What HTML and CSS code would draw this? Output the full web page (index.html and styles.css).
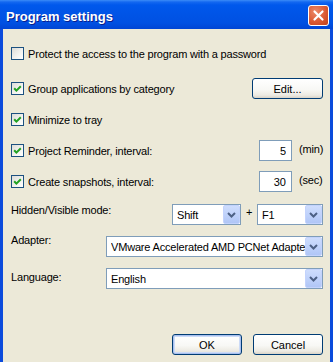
FILE: index.html
```html
<!DOCTYPE html>
<html lang="en">

<head>
  <meta charset="UTF-8">
  <meta name="viewport" content="width=device-width, initial-scale=1.0">
  <title>Program settings</title>
  <link rel="stylesheet" href="styles.css">
</head>

<body>
  <div class="window">
    <div class="titlebar">
      <span class="title">Program settings</span>
      <span class="close">
        <svg width="19" height="19" viewBox="0 0 19 19">
          <path d="M5.5 5.5 L13.5 13.5 M13.5 5.5 L5.5 13.5" stroke="#fff" stroke-width="2.2" stroke-linecap="round" />
        </svg>
      </span>
    </div>

    <div class="client">
      <div class="options">
        <div class="row">
          <label class="check"><span class="box"></span>Protect the access to the program with a password</label>
        </div>
        <div class="row row-spaced">
          <label class="check">
            <span class="box"><svg width="11" height="11" viewBox="0 0 11 11"><polyline points="2.2,5.2 4.4,7.6 8.8,3.2" fill="none" stroke="#21A121" stroke-width="2" /></svg></span>Group applications by category
          </label>
          <button class="btn btn-edit">Edit...</button>
        </div>
        <div class="row">
          <label class="check">
            <span class="box"><svg width="11" height="11" viewBox="0 0 11 11"><polyline points="2.2,5.2 4.4,7.6 8.8,3.2" fill="none" stroke="#21A121" stroke-width="2" /></svg></span>Minimize to tray
          </label>
        </div>
        <div class="row">
          <label class="check">
            <span class="box"><svg width="11" height="11" viewBox="0 0 11 11"><polyline points="2.2,5.2 4.4,7.6 8.8,3.2" fill="none" stroke="#21A121" stroke-width="2" /></svg></span>Project Reminder, interval:
          </label>
          <input class="num" type="text" value="5">
          <span class="unit">(min)</span>
        </div>
        <div class="row">
          <label class="check">
            <span class="box"><svg width="11" height="11" viewBox="0 0 11 11"><polyline points="2.2,5.2 4.4,7.6 8.8,3.2" fill="none" stroke="#21A121" stroke-width="2" /></svg></span>Create snapshots, interval:
          </label>
          <input class="num" type="text" value="30">
          <span class="unit">(sec)</span>
        </div>
      </div>

      <div class="fields">
        <div class="row">
          <span class="field-label lbl-hidden">Hidden/Visible mode:</span>
          <div class="select select-key">
            <span class="select-text">Shift</span>
            <span class="drop"><svg width="9" height="6" viewBox="0 0 9 6"><polyline points="1,1 4.5,4.5 8,1" fill="none" stroke="#4D6185" stroke-width="2" /></svg></span>
          </div>
          <span class="plus">+</span>
          <div class="select select-f">
            <span class="select-text">F1</span>
            <span class="drop"><svg width="9" height="6" viewBox="0 0 9 6"><polyline points="1,1 4.5,4.5 8,1" fill="none" stroke="#4D6185" stroke-width="2" /></svg></span>
          </div>
        </div>
        <div class="row">
          <span class="field-label lbl-adapter">Adapter:</span>
          <div class="select select-wide">
            <span class="select-text">VMware Accelerated AMD PCNet Adapter</span>
            <span class="drop"><svg width="9" height="6" viewBox="0 0 9 6"><polyline points="1,1 4.5,4.5 8,1" fill="none" stroke="#4D6185" stroke-width="2" /></svg></span>
          </div>
        </div>
        <div class="row">
          <span class="field-label lbl-language">Language:</span>
          <div class="select select-wide">
            <span class="select-text">English</span>
            <span class="drop"><svg width="9" height="6" viewBox="0 0 9 6"><polyline points="1,1 4.5,4.5 8,1" fill="none" stroke="#4D6185" stroke-width="2" /></svg></span>
          </div>
        </div>
      </div>

      <div class="footer">
        <button class="btn btn-default">OK</button>
        <button class="btn">Cancel</button>
      </div>
    </div>
  </div>
</body>

</html>
```

FILE: styles.css
```css
/* Window frame */

* {
  box-sizing: border-box;
}

body {
  margin: 0;
  background: #ECE9D8;
  font-family: "Liberation Sans", Arial, sans-serif;
  font-size: 11px;
  letter-spacing: -0.18px;
  color: #000;
}

.window {
  width: 333px;
  height: 362px;
  display: flex;
  flex-direction: column;
}

.titlebar {
  height: 29px;
  padding: 4px 4px 0 6px;
  display: flex;
  align-items: flex-start;
  background: linear-gradient(180deg, #3B8CF7 0px, #1468F0 2px, #0058EC 5px, #0054E6 50%, #0050E2 80%, #0045D4 100%);
}

.title {
  flex: 1;
  line-height: 25px;
  color: #fff;
  font-weight: bold;
  font-size: 13px;
  letter-spacing: 0;
  text-shadow: 1px 1px 0 #0A1E8C;
}

.close {
  width: 21px;
  height: 21px;
  margin-top: 1px;
  border: 1px solid #fff;
  border-radius: 3px;
  background: radial-gradient(circle at 35% 30%, #EC8A6A 0%, #DB5A33 55%, #C2401A 100%);
  display: flex;
  align-items: center;
  justify-content: center;
}

.client {
  flex: 1;
  display: flex;
  flex-direction: column;
  border-left: 3px solid #0B4BDC;
  border-right: 3px solid #0B4BDC;
  padding: 0 7px 7px 8px;
}

/* Rows */

.row {
  display: flex;
  align-items: center;
  height: 21px;
}

.options {
  display: flex;
  flex-direction: column;
  gap: 10px;
  padding-top: 14px;
}

.row-spaced {
  margin-top: 4px;
}

.check {
  flex: 1;
  display: flex;
  align-items: center;
  white-space: nowrap;
}

.box {
  width: 13px;
  height: 13px;
  margin-right: 4px;
  border: 1px solid #1C5180;
  background: linear-gradient(135deg, #DCDCD7 0%, #F4F4F1 60%, #FFFFFF 100%);
  display: flex;
}

.num {
  width: 33px;
  height: 21px;
  border: 1px solid #7F9DB9;
  background: #fff;
  text-align: right;
  padding: 0 5px 0 0;
  font: inherit;
  color: #000;
}

.unit {
  width: 24px;
  margin-left: 7px;
  padding-bottom: 3px;
}

/* Fields */

.fields {
  display: flex;
  flex-direction: column;
  gap: 11px;
  margin-top: 12px;
}

.fields .row {
  align-items: flex-start;
}

.field-label {
  flex: 1;
  line-height: 14px;
}

.lbl-hidden {
  margin-top: -1px;
}

.lbl-adapter {
  margin-top: -3px;
}

.lbl-language {
  margin-top: 2px;
}

.select {
  height: 21px;
  border: 1px solid #7F9DB9;
  background: #fff;
  display: flex;
  align-items: center;
  padding-left: 4px;
}

.select-key {
  width: 69px;
}

.select-f {
  width: 66px;
}

.select-wide {
  width: 217px;
}

.select-text {
  flex: 1;
  overflow: hidden;
  white-space: nowrap;
}

.drop {
  width: 17px;
  height: 19px;
  border: 1px solid #C3D3FD;
  border-radius: 2px;
  background: linear-gradient(180deg, #CEDDFD 0%, #BDD0FA 60%, #B0C6F6 100%);
  display: flex;
  align-items: center;
  justify-content: center;
}

.plus {
  width: 16px;
  text-align: center;
  line-height: 17px;
}

/* Buttons */

.btn {
  height: 21px;
  padding: 0;
  border: 1px solid #003C74;
  border-radius: 3px;
  background: linear-gradient(180deg, #FFFFFF 0%, #F8F8F5 55%, #ECEAE2 85%, #D9D3C7 100%);
  font: inherit;
  color: #000;
}

.btn-edit {
  width: 71px;
}

.footer {
  margin-top: auto;
  display: flex;
  justify-content: flex-end;
  gap: 11px;
}

.footer .btn {
  width: 70px;
}

.btn-default {
  box-shadow: inset 0 0 0 1px #A9C0EE, inset 0 0 0 2px #CCDBF7;
}
```
